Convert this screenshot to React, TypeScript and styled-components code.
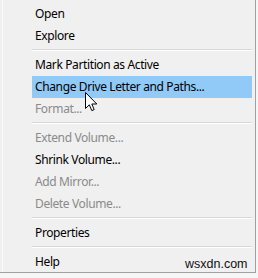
import React from "react";
import styled, { createGlobalStyle } from "styled-components";

const Global = createGlobalStyle`
  html, body { margin: 0; padding: 0; background: #ffffff; }
  body { width: 258px; height: 278px; overflow: hidden; }
`;

const Page = styled.div`
  position: relative;
  width: 258px;
  height: 278px;
  background: #f6f6f6;
`;

const Menu = styled.div`
  width: 256px;
  height: 273px;
  box-sizing: border-box;
  padding-top: 3px;
  background: #f0f0f0;
  border-right: 1px solid #a0a0a0;
  border-bottom: 1px solid #a0a0a0;
  box-shadow: inset 2px 0 0 #f0f0f0, inset 3px 0 0 #fbfbfb;
  display: flex;
  flex-direction: column;
  font-family: "Noto Sans", "Open Sans", sans-serif;
  font-size: 12px;
  letter-spacing: -0.38px;
`;

const Item = styled.div<{ $disabled?: boolean; $active?: boolean }>`
  height: 22px;
  margin: 0 3px 0 32px;
  padding-left: 3px;
  display: flex;
  align-items: center;
  color: ${(p) => (p.$disabled ? "#8a8a8a" : "#000000")};
  background: ${(p) => (p.$active ? "#91c9f7" : "transparent")};
  white-space: nowrap;
`;

const Separator = styled.div`
  height: 7px;
  margin: 0 3px 0 32px;
  display: flex;
  flex-direction: column;
  justify-content: center;
  &::before {
    content: "";
    display: block;
    height: 1px;
    background: #d7d7d7;
  }
  &::after {
    content: "";
    display: block;
    height: 1px;
    background: #ffffff;
  }
`;

const Watermark = styled.div`
  position: absolute;
  left: 185px;
  top: 257px;
  font-family: "Liberation Sans", Arial, sans-serif;
  font-size: 12.5px;
  color: #111;
`;

const Cursor = styled.svg`
  position: absolute;
  left: 85px;
  top: 92px;
`;

type Entry = { label?: string; disabled?: boolean; active?: boolean; sep?: boolean };

const entries: Entry[] = [
  { label: "Open" },
  { label: "Explore" },
  { sep: true },
  { label: "Mark Partition as Active" },
  { label: "Change Drive Letter and Paths...", active: true },
  { label: "Format...", disabled: true },
  { sep: true },
  { label: "Extend Volume...", disabled: true },
  { label: "Shrink Volume..." },
  { label: "Add Mirror...", disabled: true },
  { label: "Delete Volume...", disabled: true },
  { sep: true },
  { label: "Properties" },
  { sep: true },
  { label: "Help" },
];

export default function App() {
  return (
    <Page>
      <Global />
      <Menu>
        {entries.map((e, i) =>
          e.sep ? (
            <Separator key={i} />
          ) : (
            <Item key={i} $disabled={e.disabled} $active={e.active}>
              {e.label}
            </Item>
          )
        )}
      </Menu>
      <Watermark>wsxdn.com</Watermark>
      <Cursor width="14" height="21" viewBox="0 0 14 21">
        <path
          d="M0.5 0.5 L0.5 16.5 L4.3 12.8 L6.8 18.6 L9.2 17.6 L6.8 12 L11.8 12 Z"
          fill="#ffffff"
          stroke="#000000"
          strokeWidth="1"
          strokeLinejoin="miter"
        />
      </Cursor>
    </Page>
  );
}
